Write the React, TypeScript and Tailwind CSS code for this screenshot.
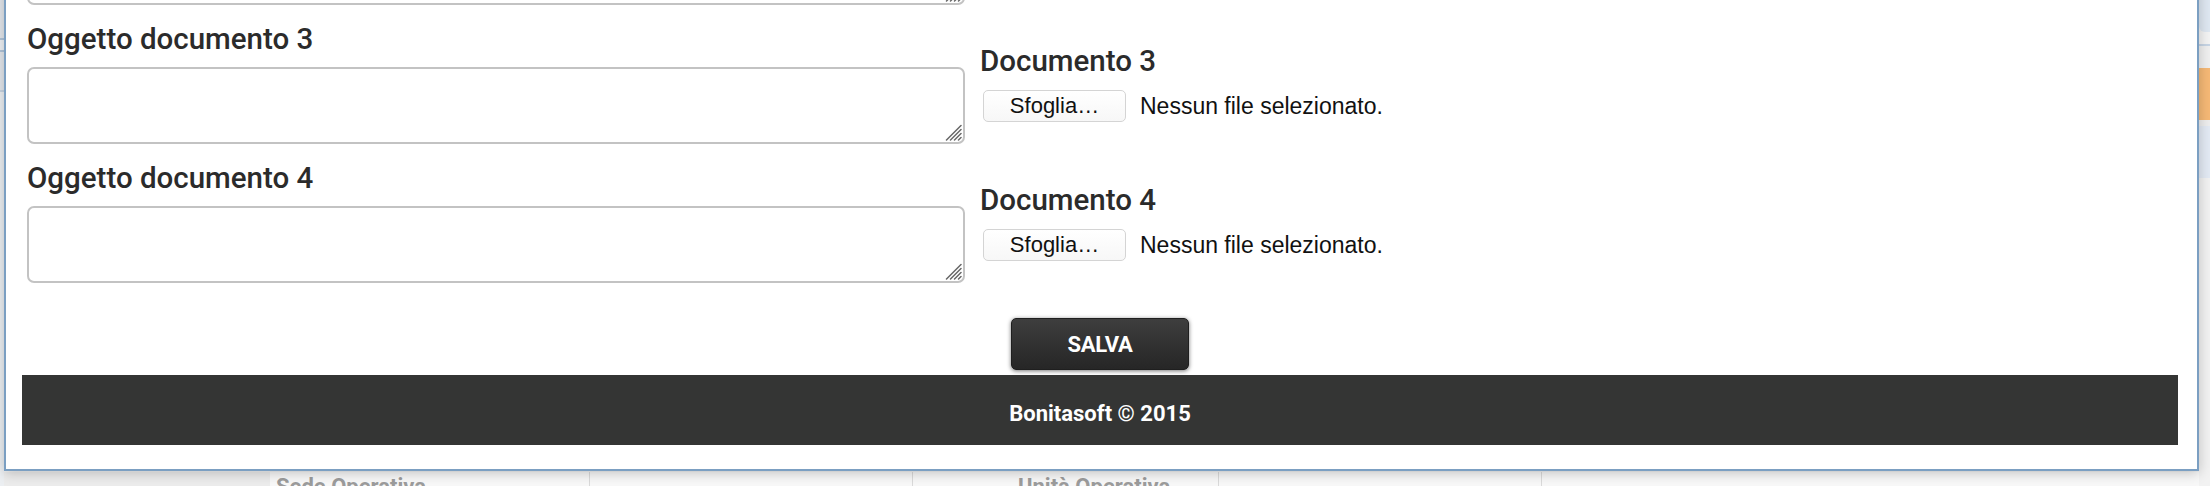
import React from "react"

const heading = { fontFamily: "Roboto, 'Liberation Sans', sans-serif" }
const sys = { fontFamily: "'Liberation Sans', Arial, sans-serif" }

function ResizeHandle() {
  return (
    <svg
      className="absolute right-[3px] bottom-[3px] pointer-events-none"
      width="17"
      height="17"
      viewBox="0 0 17 17"
    >
      <g stroke="#666" strokeWidth="1.5" strokeLinecap="round">
        <line x1="16" y1="1.5" x2="1.5" y2="16" />
        <line x1="16" y1="5.5" x2="5.5" y2="16" />
        <line x1="16" y1="9.5" x2="9.5" y2="16" />
        <line x1="16" y1="13.5" x2="13.5" y2="16" />
      </g>
    </svg>
  )
}

function Field() {
  return (
    <div className="relative">
      <textarea className="block w-full h-[77px] resize-none border-2 border-[#c3c3c3] rounded-[7px] bg-white outline-none" />
      <ResizeHandle />
    </div>
  )
}

function DocRow({ n }: { n: number }) {
  return (
    <div className="flex">
      {/* Oggetto */}
      <div className="w-[938px] shrink-0">
        <div
          className="text-[29.5px] leading-[36px] font-medium text-[#2b2b2b] mb-[10px]"
          style={heading}
        >
          Oggetto documento {n}
        </div>
        <Field />
      </div>

      {/* Documento */}
      <div className="ml-[15px] pt-[22px]">
        <div
          className="text-[29.5px] leading-[36px] font-medium text-[#2b2b2b] mb-[10px]"
          style={heading}
        >
          Documento {n}
        </div>
        <div className="flex items-center">
          <button
            className="ml-[3px] w-[143px] h-[32px] border border-[#d4d4d4] rounded-[5px] bg-gradient-to-b from-white to-[#f7f7f7] text-[22px] leading-none text-[#111]"
            style={sys}
          >
            Sfoglia…
          </button>
          <span className="ml-[14px] text-[23px] text-[#111]" style={sys}>
            Nessun file selezionato.
          </span>
        </div>
      </div>
    </div>
  )
}

export default function App() {
  return (
    <div className="relative w-[2210px] h-[486px] overflow-hidden bg-[#f2f2f2]">
      {/* Page behind the dialog */}
      <div className="flex h-full">
        <div className="w-[4px] flex flex-col">
          <div className="h-[38px] bg-[#e3e7ec]" />
          <div className="h-[2px] bg-[#b2c5da]" />
          <div className="h-[10px] bg-[#eef1f5]" />
          <div className="h-[2px] bg-[#b2c5da]" />
          <div className="h-[38px] bg-[#e3e7ec]" />
          <div className="h-[2px] bg-[#c9d5e2]" />
          <div className="flex-1 bg-[#eceff2]" />
        </div>

        <div className="flex-1 flex flex-col">
          <div className="flex-1" />
          <div
            className="h-[14px] flex text-[22px] font-bold text-[#9c9c9c] leading-[30px]"
            style={heading}
          >
            <div className="w-[266px] bg-[#ececec]" />
            <div className="w-[320px] bg-[#f8f8f8] border-r border-[#dadada] pl-[6px]">
              Sede Operativa
            </div>
            <div className="w-[323px] bg-[#f8f8f8] border-r border-[#dadada]" />
            <div className="w-[306px] bg-[#f8f8f8] border-r border-[#dadada] pl-[105px]">
              Unità Operativa
            </div>
            <div className="w-[323px] bg-[#f8f8f8] border-r border-[#dadada]" />
            <div className="flex-1 bg-[#f8f8f8]" />
          </div>
        </div>

        <div className="w-[11px] flex flex-col">
          <div className="h-[32px] bg-[#dfe8f2] rounded-bl-[6px]" />
          <div className="h-[12px] bg-[#f4f4f4]" />
          <div className="h-[2px] bg-[#c7d5e5]" />
          <div className="h-[22px] bg-[#f0f0f0]" />
          <div className="h-[52px] bg-[#f6b976]" />
          <div className="h-[6px] bg-[#eeeeee]" />
          <div className="h-[52px] bg-[#e3eaf4]" />
          <div className="flex-1 bg-[#f2f2f2]" />
        </div>
      </div>

      {/* Dialog, scrolled so only the end of the previous field shows */}
      <div className="absolute left-[4px] top-[-84px] w-[2195px] bg-white border-2 border-[#7b9fc2] shadow-[0_2px_12px_rgba(0,0,0,0.22)] pt-[10px] pb-[24px]">
        <div className="pl-[21px] flex flex-col gap-[16px]">
          <div className="w-[938px]">
            <Field />
          </div>
          <DocRow n={3} />
          <DocRow n={4} />
        </div>

        <div className="pl-[16px] pr-[19px]">
          <div className="flex justify-center pt-[35px]">
            <button
              className="w-[178px] h-[52px] rounded-[5px] border border-[#1f1f1f] bg-gradient-to-b from-[#3e3e3e] to-[#262626] shadow-[0_1px_4px_rgba(0,0,0,0.55)] text-white text-[22px] font-bold tracking-[-0.3px]"
              style={heading}
            >
              SALVA
            </button>
          </div>
          <div
            className="mt-[5px] h-[70px] bg-[#343534] flex items-center justify-center pt-[7px] text-white text-[22px] font-bold leading-[26px]"
            style={heading}
          >
            Bonitasoft © 2015
          </div>
        </div>
      </div>
    </div>
  )
}
